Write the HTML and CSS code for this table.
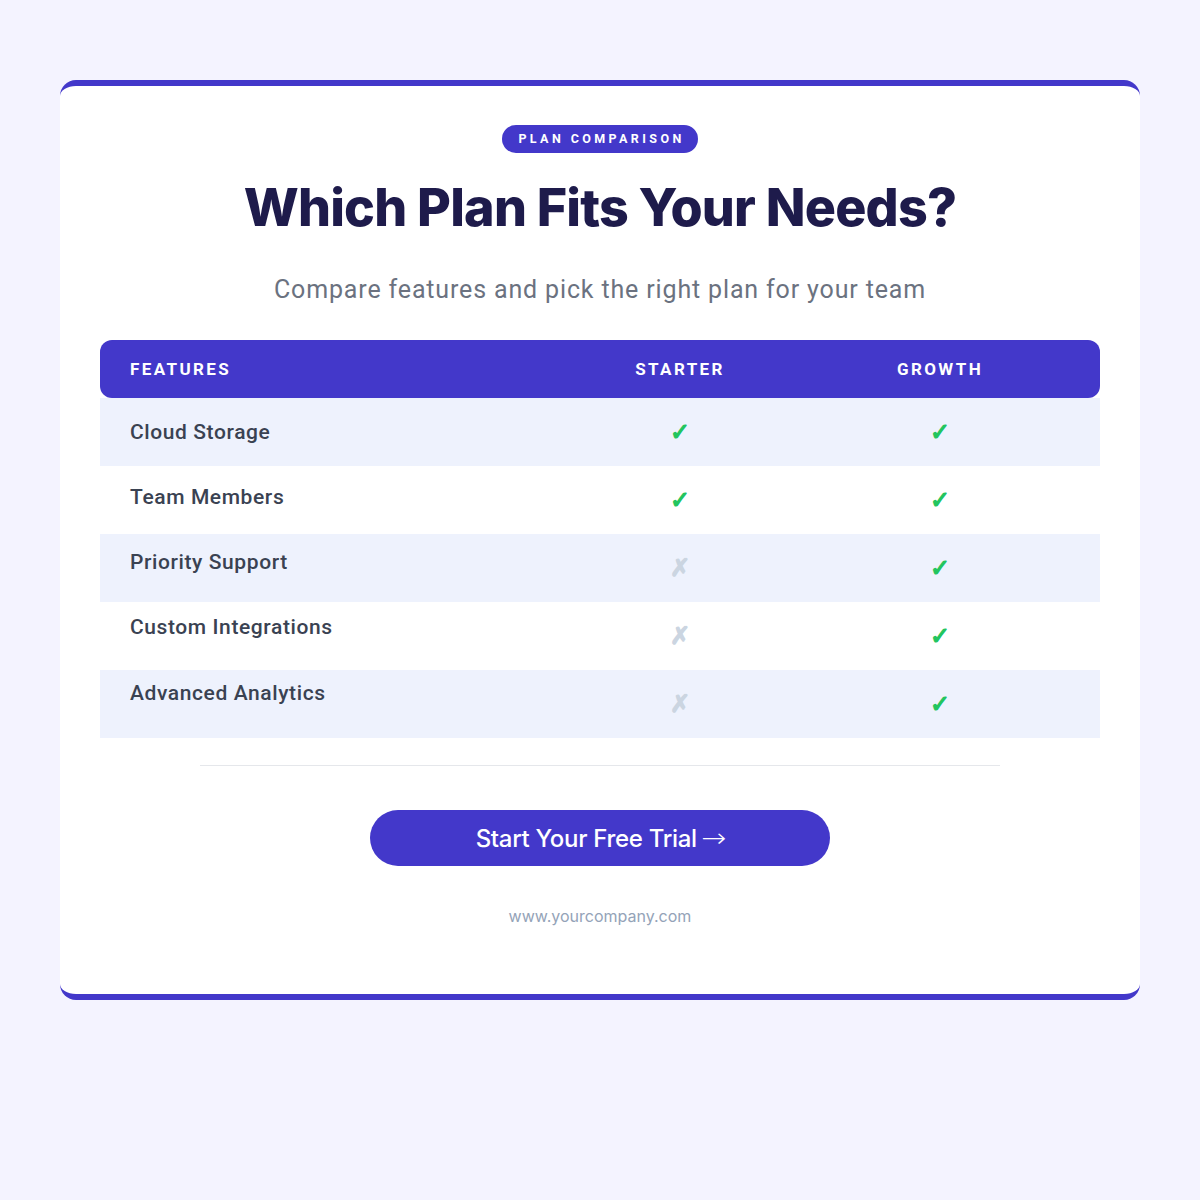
FILE: index.html
```html
<!DOCTYPE html>
<html lang="en">
<head>
<meta charset="utf-8">
<title>Plan Comparison</title>
<link rel="stylesheet" href="styles.css">
</head>
<body>
  <main class="card">
    <span class="badge">PLAN COMPARISON</span>
    <h1 class="title">Which Plan Fits Your Needs?</h1>
    <p class="subtitle">Compare features and pick the right plan for your team</p>

    <div class="table">
      <div class="thead">
        <div class="th th-feat">FEATURES</div>
        <div class="th">STARTER</div>
        <div class="th">GROWTH</div>
      </div>
      <div class="row alt">
        <div class="feat">Cloud Storage</div>
        <div class="cell yes">✓</div>
        <div class="cell yes">✓</div>
      </div>
      <div class="row">
        <div class="feat">Team Members</div>
        <div class="cell yes">✓</div>
        <div class="cell yes">✓</div>
      </div>
      <div class="row alt">
        <div class="feat">Priority Support</div>
        <div class="cell no">✗</div>
        <div class="cell yes">✓</div>
      </div>
      <div class="row">
        <div class="feat">Custom Integrations</div>
        <div class="cell no">✗</div>
        <div class="cell yes">✓</div>
      </div>
      <div class="row alt">
        <div class="feat">Advanced Analytics</div>
        <div class="cell no">✗</div>
        <div class="cell yes">✓</div>
      </div>
    </div>

    <hr class="divider">

    <a class="cta" href="#">Start Your Free Trial <span class="arrow">→</span></a>
    <p class="url">www.yourcompany.com</p>
  </main>
</body>
</html>
```

FILE: styles.css
```css
* { box-sizing: border-box; }

html, body {
  margin: 0;
  padding: 0;
}

body {
  background: #f4f3ff;
  font-family: Roboto, "Liberation Sans", sans-serif;
  padding: 80px 60px;
  min-height: 1200px;
}

.card {
  background: #ffffff;
  border-top: 6px solid #4338ca;
  border-bottom: 6px solid #4338ca;
  border-radius: 16px;
  height: 920px;
  padding: 39px 40px 0;
  display: flex;
  flex-direction: column;
  align-items: center;
}

.badge {
  display: inline-block;
  background: #4338ca;
  color: #ffffff;
  font-family: Roboto, sans-serif;
  font-weight: 700;
  font-size: 12.5px;
  letter-spacing: 3.4px;
  line-height: 28px;
  height: 28px;
  padding: 0 13px 0 16px;
  border-radius: 14px;
}

.title {
  margin: 23px 0 0;
  font-family: Inter, sans-serif;
  font-weight: 800;
  font-size: 52px;
  line-height: 64px;
  letter-spacing: -0.8px;
  color: #1e1b4b;
}

.subtitle {
  margin: 34px 0 0;
  font-family: Roboto, sans-serif;
  font-weight: 400;
  font-size: 25px;
  line-height: 32px;
  letter-spacing: 0.85px;
  color: #6b7280;
}

.table {
  width: 100%;
  margin-top: 34px;
}

.thead,
.row {
  display: grid;
  grid-template-columns: 420px 260px 260px;
  padding: 0 30px;
}

.thead {
  background: #4338ca;
  border-radius: 12px;
  height: 58px;
  align-items: center;
}

.th {
  color: #ffffff;
  font-weight: 700;
  font-size: 17px;
  letter-spacing: 2.4px;
  text-align: center;
}

.th-feat { text-align: left; }

.row {
  height: 68px;
}

.row.alt { background: #eef2fd; }

.feat {
  font-size: 21px;
  font-weight: 500;
  line-height: 24px;
  letter-spacing: 0.6px;
  color: #3a4252;
  padding-top: 22px;
}

.row:nth-child(3) .feat { padding-top: 19px; }
.row:nth-child(4) .feat { padding-top: 16px; }
.row:nth-child(5) .feat { padding-top: 13px; }
.row:nth-child(6) .feat { padding-top: 11px; }

.cell {
  display: flex;
  align-items: center;
  justify-content: center;
  font-family: "DejaVu Sans", sans-serif;
  font-weight: 400;
  font-size: 24px;
  -webkit-text-stroke: 1.3px currentColor;
}

.yes { color: #22c55e; }
.no { color: #cbd5e1; }

.divider {
  width: 800px;
  border: 0;
  border-top: 1px solid #e5e7eb;
  margin: 27px 0 0;
}

.cta {
  margin-top: 44px;
  width: 460px;
  height: 56px;
  border-radius: 28px;
  background: #4338ca;
  color: #ffffff;
  text-decoration: none;
  display: flex;
  align-items: center;
  justify-content: center;
  font-family: Inter, sans-serif;
  font-weight: 500;
  font-size: 24px;
  letter-spacing: -0.3px;
}

.arrow {
  font-family: "DejaVu Sans", sans-serif;
  font-weight: 200;
  font-size: 26px;
  margin-left: 6px;
  transform: scaleX(1.15);
  display: inline-block;
}

.url {
  margin: 40px 0 0;
  font-family: Inter, sans-serif;
  font-size: 16px;
  line-height: 20px;
  color: #94a3b8;
}
```
